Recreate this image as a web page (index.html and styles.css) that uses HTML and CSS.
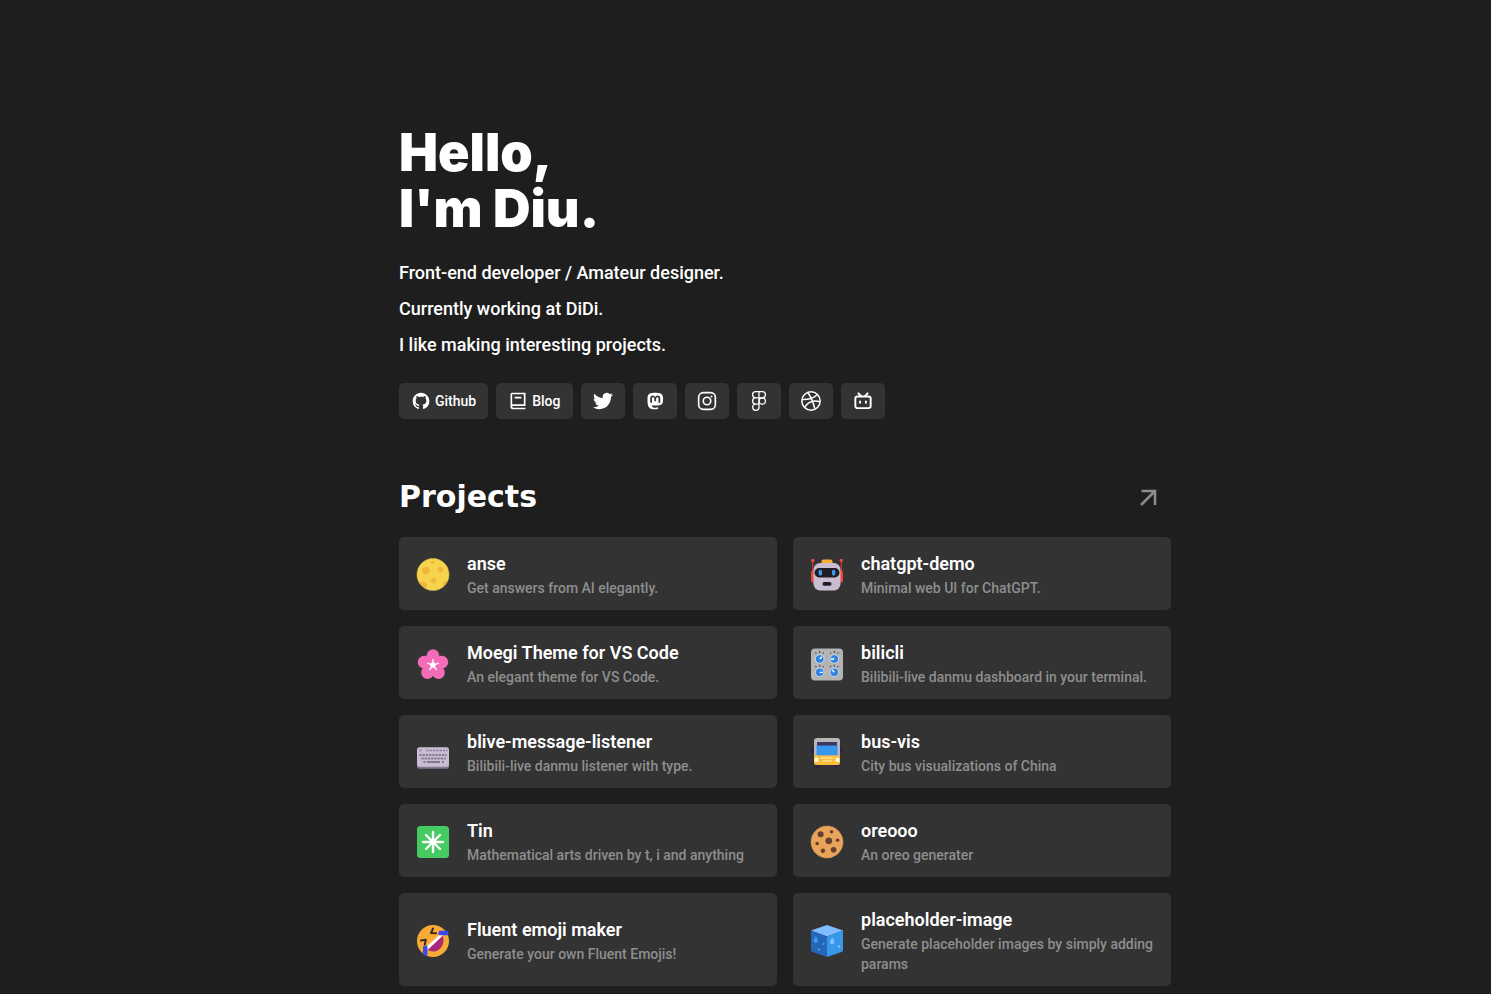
FILE: index.html
```html
<!DOCTYPE html>
<html lang="en">
<head>
<meta charset="utf-8">
<meta name="viewport" content="width=device-width, initial-scale=1">
<title>Diu</title>
<link rel="stylesheet" href="styles.css">
</head>
<body>
<main class="page">
  <header class="intro">
    <h1 class="intro-title">Hello,<br>I'm Diu.</h1>
    <p class="intro-line">Front-end developer / Amateur designer.</p>
    <p class="intro-line">Currently working at DiDi.</p>
    <p class="intro-line">I like making interesting projects.</p>
    <nav class="links" aria-label="Social links">
      <a class="link" href="#github"><svg class="link-icon" viewBox="0 0 24 24" fill="currentColor" aria-hidden="true"><path d="M12 2C6.475 2 2 6.475 2 12a9.994 9.994 0 0 0 6.838 9.488c.5.087.687-.213.687-.476 0-.237-.013-1.024-.013-1.862-2.512.463-3.162-.612-3.362-1.175-.113-.288-.6-1.175-1.025-1.413-.35-.187-.85-.65-.013-.662.788-.013 1.35.725 1.538 1.025.9 1.512 2.338 1.087 2.912.825.088-.65.35-1.087.638-1.337-2.225-.25-4.55-1.113-4.55-4.938 0-1.088.387-1.987 1.025-2.688-.1-.25-.45-1.275.1-2.65 0 0 .837-.262 2.75 1.026a9.28 9.28 0 0 1 2.5-.338c.85 0 1.7.112 2.5.337 1.912-1.3 2.75-1.024 2.75-1.024.55 1.375.2 2.4.1 2.65.637.7 1.025 1.587 1.025 2.687 0 3.838-2.337 4.688-4.562 4.938.362.312.675.912.675 1.85 0 1.337-.013 2.412-.013 2.75 0 .262.188.574.688.474A10.016 10.016 0 0 0 22 12c0-5.525-4.475-10-10-10z"/></svg>Github</a>
      <a class="link" href="#blog"><svg class="link-icon" viewBox="0 0 24 24" fill="currentColor" aria-hidden="true"><path d="M21 18H6a1 1 0 0 0 0 2h15v2H6a3 3 0 0 1-3-3V4a2 2 0 0 1 2-2h16v16zM5 16.05c.162-.033.329-.05.5-.05H19V4H5v12.05zM16 9H8V7h8v2z"/></svg>Blog</a>
      <a class="link" href="#twitter" aria-label="Twitter"><svg class="link-icon" viewBox="0 0 24 24" fill="currentColor" aria-hidden="true"><path d="M23.953 4.57a10 10 0 0 1-2.825.775 4.958 4.958 0 0 0 2.163-2.723c-.951.555-2.005.959-3.127 1.184a4.92 4.92 0 0 0-8.384 4.482C7.69 8.095 4.067 6.13 1.64 3.162a4.822 4.822 0 0 0-.666 2.475c0 1.71.87 3.213 2.188 4.096a4.904 4.904 0 0 1-2.228-.616v.06a4.923 4.923 0 0 0 3.946 4.827 4.996 4.996 0 0 1-2.212.085 4.936 4.936 0 0 0 4.604 3.417 9.867 9.867 0 0 1-6.102 2.105c-.39 0-.779-.023-1.17-.067a13.995 13.995 0 0 0 7.557 2.209c9.053 0 13.998-7.496 13.998-13.985 0-.21 0-.42-.015-.63A9.935 9.935 0 0 0 24 4.59z"/></svg></a>
      <a class="link" href="#mastodon" aria-label="Mastodon"><svg class="link-icon" viewBox="0 0 24 24" fill="currentColor" aria-hidden="true"><path d="M21.26 14c-.28 1.41-2.44 2.96-4.97 3.26-1.31.15-2.6.3-3.97.24-2.25-.11-4-.54-4-.54v.62c.32 2.22 2.22 2.35 4.03 2.42 1.82.05 3.44-.46 3.44-.46l.08 1.65s-1.28.68-3.55.81c-1.25.07-2.81-.03-4.62-.5-3.92-1.05-4.6-5.24-4.7-9.5l-.01-3.43c0-4.34 2.83-5.61 2.83-5.61C7.26 2.3 9.72 2 12.28 2h.06c2.57 0 5.02.3 6.47.96 0 0 2.83 1.27 2.83 5.61 0 0 .04 3.21-.38 5.43M18.32 8.91c0-1.08-.3-1.91-.85-2.56-.56-.63-1.3-.96-2.23-.96-1.06 0-1.87.41-2.42 1.23l-.5.88-.53-.88c-.53-.82-1.34-1.23-2.41-1.23-.93 0-1.67.33-2.23.96-.56.65-.85 1.48-.85 2.56v5.26h2.1v-5.1c0-1.07.45-1.62 1.35-1.62 1 0 1.5.65 1.5 1.93v2.79h2.09V9.38c0-1.28.5-1.93 1.5-1.93.9 0 1.35.55 1.35 1.62v5.1h2.1z"/></svg></a>
      <a class="link" href="#instagram" aria-label="Instagram"><svg class="link-icon" viewBox="0 0 24 24" fill="none" stroke="currentColor" stroke-width="2" aria-hidden="true"><rect x="2" y="2" width="20" height="20" rx="5.5"/><circle cx="12" cy="12" r="4.5"/><circle cx="17.4" cy="6.6" r="1.2" fill="currentColor" stroke="none"/></svg></a>
      <a class="link" href="#figma" aria-label="Figma"><svg class="link-icon" viewBox="0 0 24 24" fill="none" stroke="currentColor" stroke-width="1.5" aria-hidden="true"><path d="M12 .8H8a3.7 3.7 0 0 0 0 7.4h4zM12 .8h4a3.7 3.7 0 0 1 0 7.4h-4zM12 8.2H8a3.7 3.7 0 0 0 0 7.4h4zM12 15.6H8a3.8 3.8 0 1 0 4 3.8z"/><circle cx="15.9" cy="11.9" r="3.8"/></svg></a>
      <a class="link" href="#dribbble" aria-label="Dribbble"><svg class="link-icon" viewBox="0 0 24 24" fill="none" stroke="currentColor" stroke-width="1.8" aria-hidden="true"><circle cx="12" cy="12" r="11"/><path d="M8 1.8c4.2 5.5 6.8 11.5 8.4 19.2M1.3 10.3c8 .2 14.2-1.5 18.3-6.2M4.4 19.8c3.7-6.6 10-9.2 18.4-6.9"/></svg></a>
      <a class="link" href="#bilibili" aria-label="Bilibili"><svg class="link-icon" viewBox="0 0 24 24" fill="none" stroke="currentColor" stroke-width="2.3" stroke-linecap="round" aria-hidden="true"><rect x="2.8" y="6.5" width="18.4" height="14" rx="2.5"/><path d="M6.5 2.8l3 3.2M17.500 2.8l-3 3.2M8.500 12.500v1.500M15.500 12.500v1.500"/></svg></a>
    </nav>
  </header>

  <section class="projects" aria-labelledby="projects-title">
    <div class="projects-head">
      <h2 class="projects-title" id="projects-title">Projects</h2>
      <a class="more" href="#all-projects" aria-label="All projects"><svg class="more-icon" viewBox="0 0 24 24" fill="none" stroke="currentColor" stroke-width="2.5" aria-hidden="true"><path d="M5.5 6H19v14M18.5 6.5 5 20"/></svg></a>
    </div>
    <div class="grid">
      <a class="card" href="#anse">
        <svg class="card-icon" viewBox="0 0 36 36" aria-hidden="true"><circle cx="18" cy="17.5" r="16" fill="#f8d34c" stroke="#e9cd55" stroke-width=".8" stroke-dasharray="1.5 1"/><g fill="#f0b73f"><circle cx="10.8" cy="13.5" r="3.8"/><circle cx="25.5" cy="12.5" r="2.8"/><circle cx="18.7" cy="23.5" r="2.7"/><circle cx="17.5" cy="5.5" r="1.7"/><path d="M4.5 26a4 4 0 0 1 6.5 5.5A16 16 0 0 1 4.5 26zM33 23a16 16 0 0 1-5 7c-1-4 2-7 5-7z"/></g></svg>
        <span class="card-text"><span class="card-title">anse</span><span class="card-desc">Get answers from AI elegantly.</span></span>
      </a>
      <a class="card" href="#chatgpt-demo">
        <svg class="card-icon" viewBox="0 0 36 36" aria-hidden="true"><path d="M3.7 3v16M32.3 3v16" stroke="#c83a34" stroke-width="1.3"/><g fill="#ef4438"><circle cx="3.7" cy="3.5" r="1.8"/><circle cx="32.3" cy="3.5" r="1.8"/><rect x="2" y="13.5" width="4" height="12" rx="1.8"/><rect x="30" y="13.5" width="4" height="12" rx="1.8"/></g><rect x="12.5" y="2.5" width="11" height="6" rx="2" fill="#f9ad38"/><rect x="4.5" y="6" width="27" height="27.5" rx="6.5" fill="#c8bdd1"/><rect x="5.5" y="11" width="25" height="9.5" rx="4.7" fill="#211d22"/><g fill="#359cf1"><rect x="9.7" y="12.8" width="3.3" height="5.8" rx="1.5"/><rect x="23" y="12.8" width="3.3" height="5.8" rx="1.5"/></g><rect x="13.5" y="25" width="9" height="3.8" rx="1.9" fill="#211d22"/></svg>
        <span class="card-text"><span class="card-title">chatgpt-demo</span><span class="card-desc">Minimal web UI for ChatGPT.</span></span>
      </a>
      <a class="card" href="#moegi">
        <svg class="card-icon" viewBox="0 0 36 36" aria-hidden="true"><g fill="#f46bb7"><ellipse cx="18" cy="9.8" rx="6.4" ry="6.500"/><ellipse cx="18" cy="9.8" rx="6.4" ry="6.500" transform="rotate(72 18 19)"/><ellipse cx="18" cy="9.8" rx="6.4" ry="6.500" transform="rotate(144 18 19)"/><ellipse cx="18" cy="9.8" rx="6.4" ry="6.500" transform="rotate(216 18 19)"/><ellipse cx="18" cy="9.8" rx="6.4" ry="6.500" transform="rotate(288 18 19)"/><circle cx="18" cy="19" r="6"/></g><path d="M18 19v-5.500M18 19l5.300-1.700M18 19l3.300 4.600M18 19l-3.300 4.600M18 19l-5.300-1.700" stroke="#fff" stroke-width="1.3" stroke-linecap="round"/><circle cx="18" cy="19" r="2.7" fill="#fff"/></svg>
        <span class="card-text"><span class="card-title">Moegi Theme for VS Code</span><span class="card-desc">An elegant theme for VS Code.</span></span>
      </a>
      <a class="card" href="#bilicli">
        <svg class="card-icon" viewBox="0 0 36 36" aria-hidden="true"><rect x="2" y="2.5" width="32" height="32" rx="4" fill="#b5b4b5"/><g fill="#2d83e4" stroke="#e0e2e6" stroke-width=".8"><circle cx="10.7" cy="13" r="4.3"/><circle cx="25.3" cy="13" r="4.3"/><circle cx="10.7" cy="26.3" r="4.3"/><circle cx="25.3" cy="26.3" r="4.3"/></g><path d="M10.7 13l2.2-2.2M25.3 13h-3.3M10.7 26.3h3.3M25.3 26.3l-2.2-2.5" stroke="#fff" stroke-width="1.3"/><path d="M6.5 6.5l.8 1.2M10.7 5v2M14.7 6.5l-.8 1.2M21.3 6.5l.8 1.2M25.3 5v2M29.3 6.5l-.8 1.2M6.5 20l.8 1.2M10.7 18.8v2M14.7 20l-.8 1.2M21.3 20l.8 1.2M25.3 18.8v2M29.3 20l-.8 1.2" stroke="#4b484c" stroke-width="1.2"/></svg>
        <span class="card-text"><span class="card-title">bilicli</span><span class="card-desc">Bilibili-live danmu dashboard in your terminal.</span></span>
      </a>
      <a class="card" href="#blive-message-listener">
        <svg class="card-icon" viewBox="0 0 36 36" aria-hidden="true"><rect x="2" y="15" width="32" height="18.7" rx="2.5" fill="#857792"/><rect x="2" y="12.3" width="32" height="19.5" rx="2.5" fill="#c8bdd3"/><path d="M4.5 15.5h3M11.5 15.5h21" stroke="#84768f" stroke-width="1.5" stroke-dasharray="2 1.3"/><path d="M4.5 20h27M6.5 23.5h24" stroke="#84768f" stroke-width="1.9" stroke-dasharray="2.2 1"/><path d="M8.5 27h2M12 27h13M27 27h2" stroke="#84768f" stroke-width="1.9"/></svg>
        <span class="card-text"><span class="card-title">blive-message-listener</span><span class="card-desc">Bilibili-live danmu listener with type.</span></span>
      </a>
      <a class="card" href="#bus-vis">
        <svg class="card-icon" viewBox="0 0 36 36" aria-hidden="true"><g fill="#33204a"><rect x="2" y="12.5" width="3.5" height="5.5" rx="1.2"/><rect x="30.5" y="12.5" width="3.5" height="5.5" rx="1.2"/><rect x="6" y="27" width="5" height="5.5" rx="1"/><rect x="25" y="27" width="5" height="5.5" rx="1"/></g><path d="M5 21V6a3 3 0 0 1 3-3h20a3 3 0 0 1 3 3v15z" fill="#b8b7b8"/><path d="M8 7h20v5H8z" fill="#3f3561"/><path d="M7.5 10.5h21v10h-21z" fill="#3797ed"/><path d="M5 20.5h26V28a2 2 0 0 1-2 2H7a2 2 0 0 1-2-2z" fill="#f9bd38"/><path d="M12 23h12M14 26h8" stroke="#fbe190" stroke-width="1.5" stroke-linecap="round"/><rect x="5.5" y="22.5" width="4" height="4.5" rx="1.5" fill="#fff7e6"/><rect x="26.5" y="22.5" width="4" height="4.5" rx="1.5" fill="#fff7e6"/></svg>
        <span class="card-text"><span class="card-title">bus-vis</span><span class="card-desc">City bus visualizations of China</span></span>
      </a>
      <a class="card" href="#tin">
        <svg class="card-icon" viewBox="0 0 36 36" aria-hidden="true"><rect x="2" y="2" width="32" height="32" rx="3.5" fill="#46cb62"/><path d="M18 8v20M8 18h20M11 11l14 14M25 11l-14 14" stroke="#fff" stroke-width="2.4" stroke-linecap="round"/></svg>
        <span class="card-text"><span class="card-title">Tin</span><span class="card-desc">Mathematical arts driven by t, i and anything</span></span>
      </a>
      <a class="card" href="#oreooo">
        <svg class="card-icon" viewBox="0 0 36 36" aria-hidden="true"><circle cx="18" cy="18" r="16" fill="#e9a45b" stroke="#d99751" stroke-width=".8" stroke-dasharray="1.5 1"/><g fill="#66402d"><circle cx="11.6" cy="10.3" r="3"/><circle cx="22.5" cy="7.7" r="1.7"/><circle cx="19.8" cy="16.8" r="3.4"/><circle cx="28.6" cy="16.2" r="1.8"/><circle cx="8.2" cy="19.5" r="1.8"/><circle cx="13.9" cy="26.7" r="2.2"/><circle cx="24.6" cy="25.8" r="2.8"/></g></svg>
        <span class="card-text"><span class="card-title">oreooo</span><span class="card-desc">An oreo generater</span></span>
      </a>
      <a class="card" href="#fluent-emoji-maker">
        <svg class="card-icon" viewBox="0 0 36 36" aria-hidden="true"><circle cx="18" cy="18" r="16" fill="#f9ac35"/><path d="M27.5 12c2 5 1 11-3.5 14.5-4 3-9 2.5-12.5-.5z" fill="#aa2678"/><path d="M25.5 11 28 12.500 12.500 27l-1.800-2.500z" fill="#fff"/><path d="M18 5.500l-2 4.500 5 .3M6 17.500l4.800-.7-1 4.700" fill="none" stroke="#40262a" stroke-width="2" stroke-linecap="round" stroke-linejoin="round"/><rect x="23.5" y="7.700" width="10" height="4.500" rx="1.500" fill="#3948ef"/><rect x="8" y="22.500" width="4.500" height="10" rx="1.500" fill="#3948ef"/></svg>
        <span class="card-text"><span class="card-title">Fluent emoji maker</span><span class="card-desc">Generate your own Fluent Emojis!</span></span>
      </a>
      <a class="card" href="#placeholder-image">
        <svg class="card-icon" viewBox="0 0 36 36" aria-hidden="true"><path d="M18 2 34 7.500 18 13.500 2 7.500z" fill="#80bcff"/><path d="M2 7.500l16 6V34L3.500 29Q2 28.500 2 27z" fill="#2467b8"/><path d="M34 7.500l-16 6V34l14.500-5q1.500-.5 1.500-2z" fill="#3797e9"/><path d="M6.800 13c1 2 2.200 3 2.200 4.500a2.300 2.300 0 0 1-4.600 0c0-1.500 1.500-2.500 2.400-4.500z" fill="#3a9bef"/><path d="M23.300 14.500c1 2 2.200 3 2.200 4.500a2.300 2.300 0 0 1-4.600 0c0-1.500 1.500-2.500 2.400-4.500z" fill="#83c2ff"/><circle cx="14.500" cy="21" r="1.200" fill="#3a9bef"/><circle cx="10" cy="26.500" r="1.300" fill="#3a9bef"/><circle cx="30" cy="23.500" r="1.300" fill="#83c2ff"/></svg>
        <span class="card-text"><span class="card-title">placeholder-image</span><span class="card-desc">Generate placeholder images by simply adding params</span></span>
      </a>
    </div>
  </section>
</main>
</body>
</html>
```
FILE: styles.css
```css
* { box-sizing: border-box; }

body {
  margin: 0;
  background: #1e1e1e;
  color: #fff;
  font-family: Roboto, "Liberation Sans", sans-serif;
  font-weight: 500;
}

a { color: inherit; text-decoration: none; }
svg { display: block; flex: none; }

.page {
  max-width: 851px;
  margin: 0 auto;
  padding: 125px 0 80px 79px;
}

.intro-title {
  margin: 0 0 18px;
  font: 900 52px/56px Inter, sans-serif;
}

.intro-line {
  margin: 0;
  font-size: 18px;
  line-height: 36px;
}

.links {
  display: flex;
  flex-wrap: wrap;
  gap: 8px;
  margin-top: 20px;
}

.link {
  display: flex;
  align-items: center;
  gap: 4px;
  height: 36px;
  padding: 0 12px;
  border-radius: 5px;
  background: #333;
  font-size: 14px;
}

.link-icon { width: 20px; height: 20px; }

.projects { margin-top: 58px; }

.projects-head {
  display: flex;
  align-items: center;
  justify-content: space-between;
  margin-bottom: 20px;
  padding-right: 11px;
}

.projects-title {
  margin: 0;
  font: 700 30px/40px "DejaVu Sans", sans-serif;
}

.more { color: #8e8e8e; }
.more-icon { width: 24px; height: 24px; }

.grid {
  display: grid;
  grid-template-columns: repeat(2, minmax(0, 1fr));
  gap: 16px;
}

.card {
  display: flex;
  align-items: center;
  gap: 16px;
  padding: 14px 16px 12px;
  border-radius: 5px;
  background: #333;
}

.card-icon { width: 36px; height: 36px; }

.card-text {
  display: flex;
  flex-direction: column;
  gap: 1px;
  min-width: 0;
}

.card-title {
  font-size: 18px;
  font-weight: 600;
  line-height: 26px;
}

.card-desc {
  color: #8e8e8e;
  font-size: 14px;
  line-height: 20px;
}

@media (max-width: 700px) {
  .page { padding: 64px 24px; }
  .grid { grid-template-columns: 1fr; }
}
```
